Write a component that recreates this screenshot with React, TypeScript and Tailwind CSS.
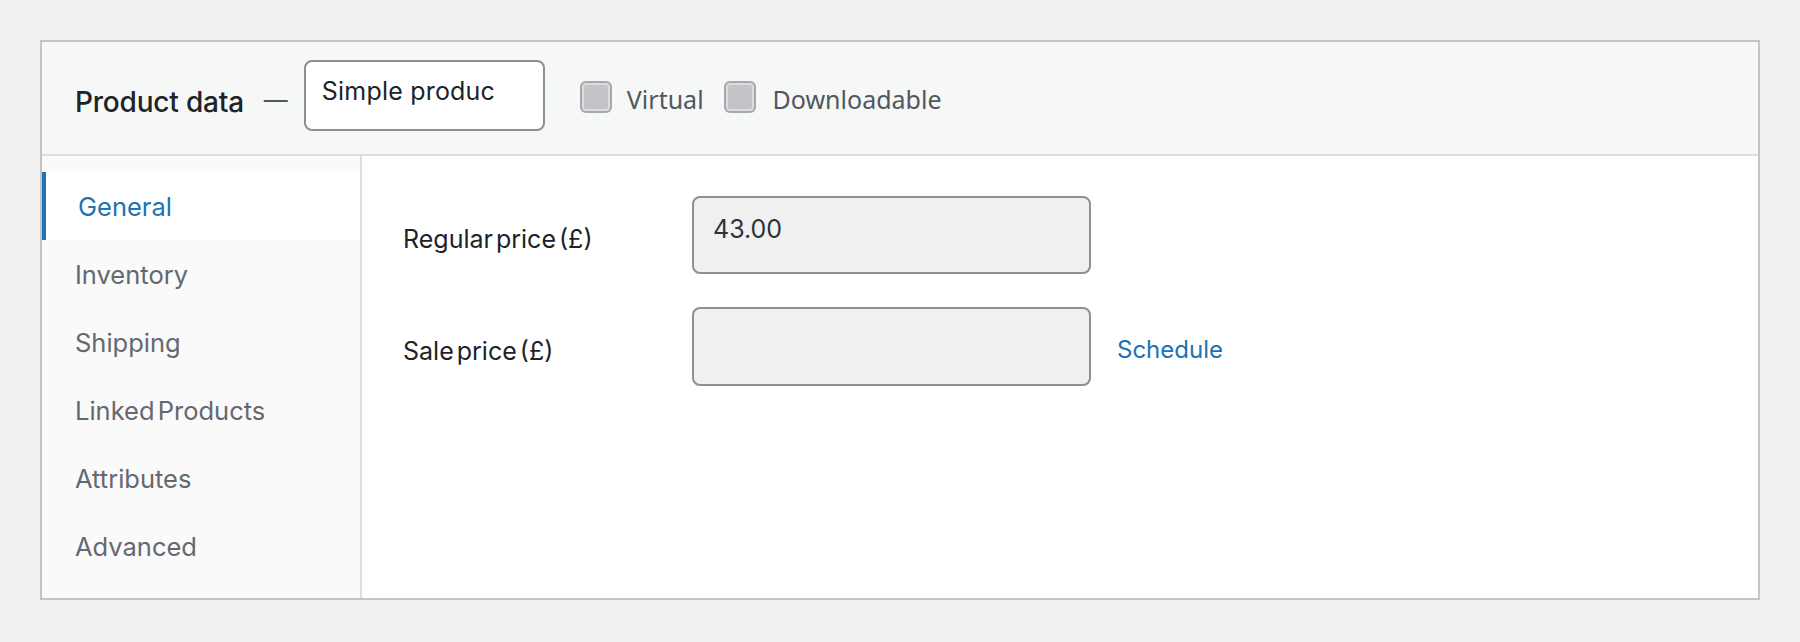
import React from "react";

const tabs = ["General", "Inventory", "Shipping", "Linked Products", "Attributes", "Advanced"];

function Checkbox() {
  return (
    <span className="block shrink-0 w-[32px] h-[32px] rounded-[6px] border-2 border-[#a7aaad] bg-[#c3c4c7] shadow-[inset_0_0_0_2px_#dcdcde]" />
  );
}

export default function App() {
  return (
    <div className="w-[1800px] h-[642px] bg-[#f0f0f1] pt-[40px] pl-[40px]" style={{ fontFamily: "Inter, 'Noto Sans', sans-serif" }}>
      <div className="w-[1720px] h-[560px] border-2 border-[#c3c4c7] bg-white flex flex-col">
        {/* Header */}
        <div className="h-[114px] shrink-0 bg-[#f6f7f7] border-b-2 border-[#dcdcde] flex items-center pl-[33px]">
          <span className="text-[28px] text-[#1d2327] font-medium tracking-[-0.2px] mt-[8px]">Product data</span>
          <span className="text-[24px] text-[#50575e] ml-[20px] mt-[4px]">—</span>
          <div className="ml-[16px] w-[241px] h-[71px] rounded-[8px] border-2 border-[#8c8f94] bg-white pl-[16px] pt-[13px] mt-[-6px]">
            <div className="whitespace-nowrap text-[25px] leading-[32px] text-[#1d2327] tracking-[0.2px]">Simple produc</div>
          </div>
          <div className="ml-[35px] flex items-center mt-[-2px]">
            <Checkbox />
            <span className="ml-[15px] text-[25px] text-[#50575e] mt-[6px]" style={{ fontFamily: "'Noto Sans', sans-serif" }}>Virtual</span>
            <span className="ml-[20px]"><Checkbox /></span>
            <span className="ml-[17px] text-[25px] text-[#50575e] mt-[6px]" style={{ fontFamily: "'Noto Sans', sans-serif" }}>Downloadable</span>
          </div>
        </div>
        {/* Body */}
        <div className="flex flex-1">
          <div className="w-[320px] shrink-0 bg-[#fafafa] border-r-2 border-[#dcdcde] pt-[16px]">
            {tabs.map((t, i) =>
              i === 0 ? (
                <div key={t} className="h-[68px] bg-white border-l-4 border-[#2271b1] pl-[32px] pt-[3px] flex items-center text-[25.5px] text-[#2271b1]">
                  {t}
                </div>
              ) : (
                <div key={t} className="h-[68px] pl-[33px] pt-[3px] flex items-center text-[25.5px] text-[#646970]" style={{ wordSpacing: "-4px" }}>
                  {t}
                </div>
              )
            )}
          </div>
          <div className="flex-1 pt-[40px] pl-[41px]">
            <div className="flex items-center">
              <div className="w-[289px] text-[25px] text-[#1d2327] mt-[10px]" style={{ wordSpacing: "-4px" }}>Regular price (£)</div>
              <div className="w-[399px] h-[78px] rounded-[8px] border-2 border-[#8c8f94] bg-[#f0f0f1] pl-[19px] pt-[16px] text-[25px] leading-[30px] text-[#2c3338]">43.00</div>
            </div>
            <div className="flex items-center mt-[33px]">
              <div className="w-[289px] text-[25px] text-[#1d2327] mt-[10px]" style={{ wordSpacing: "-4px" }}>Sale price (£)</div>
              <div className="w-[399px] h-[79px] rounded-[8px] border-2 border-[#8c8f94] bg-[#f0f0f1]" />
              <a className="ml-[26px] text-[24px] text-[#2271b1] mt-[6px]">Schedule</a>
            </div>
          </div>
        </div>
      </div>
    </div>
  );
}
